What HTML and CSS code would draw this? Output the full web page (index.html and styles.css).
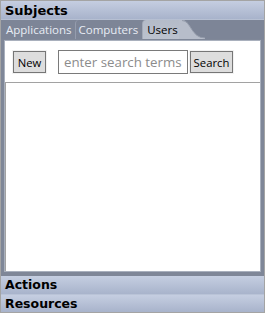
FILE: index.html
```html
<!DOCTYPE html>
<html>
<head>
<meta charset="utf-8">
<link rel="stylesheet" href="styles.css">
</head>
<body>
<div class="panel">
  <div class="bar head">Subjects</div>
  <div class="tabs">
    <div class="tab">Applications</div>
    <div class="tab">Computers</div>
    <div class="tab active">Users
      <svg class="curve" width="26" height="19" viewBox="0 0 26 19"><path d="M0 0 H3 C12 0 12 18 26 18 V19 H0 Z" fill="#b7bdca"/><path d="M3 0.5 C12 0.5 12 18 26 18" fill="none" stroke="#959cab"/></svg>
    </div>
  </div>
  <div class="frame">
    <div class="content">
      <div class="toolbar">
        <button class="btn new">New</button>
        <input class="search" type="text" placeholder="enter search terms">
        <button class="btn find">Search</button>
      </div>
      <div class="list"></div>
    </div>
  </div>
  <div class="bar foot">Actions</div>
  <div class="bar foot last">Resources</div>
</div>
</body>
</html>
```
FILE: styles.css
```css
html, body { margin: 0; padding: 0; background: #fff; }
body { font-family: "Open Sans", sans-serif; }
.panel {
  width: 263px; height: 311px;
  border: 1px solid #a4a4a4;
  display: flex; flex-direction: column;
  background: #8a92a4;
}
.bar {
  height: 18px; line-height: 18px;
  font-family: "DejaVu Sans", sans-serif;
  font-weight: bold; font-size: 12.5px; color: #000;
  padding-left: 4px;
  background: linear-gradient(#c5cee1, #a8b3cb);
  flex: none;
}
.head { border-bottom: 1px solid #b6bfd2; height: 18px; line-height: 19px; font-size: 13px; }
.tabs {
  height: 19px; display: flex; align-items: flex-end;
  background: #7d8597; padding-left: 2px; flex: none;
}
.tab {
  position: relative;
  font-family: "Open Sans", sans-serif;
  font-size: 11.5px; color: #e8ecf4; height: 19px; line-height: 20px;
  padding: 0 3px 0 3px;
  border-left: 1px solid #959cad;
  border-radius: 4px 0 0 0;
}
.tab:first-child { border-left: none; }
.tab.active {
  background: linear-gradient(#b4bbc8, #bcc2ce); color: #000;
  margin-left: 1px; padding-left: 4px; padding-right: 1px;
  border-left: 1px solid #a3aab8;
}
.curve { position: absolute; left: 100%; top: 0; }
.frame {
  flex: 1; padding: 1px 3px 4px 3px; background: #7f8798;
  display: flex;
}
.content {
  flex: 1; background: #fff; border: 1px solid #a9b0bd;
  display: flex; flex-direction: column;
}
.toolbar {
  display: flex; align-items: center;
  padding: 9px 0 8px 8px;
}
.btn {
  font-family: "Open Sans", sans-serif; font-size: 11.3px; color: #000;
  height: 22px; padding: 0; background: #dddddd;
  border: 1px solid #767676; box-shadow: 0 0 0 1px #f2f2f2;
}
.new { width: 33px; }
.find { width: 43px; }
.search {
  width: 130px; height: 24px; box-sizing: border-box; margin: 0 2px 0 12px;
  border: 1px solid #7a7a7a; padding: 0 5px;
  font-family: "Open Sans", sans-serif; font-size: 13.3px; outline: none;
}
.search::placeholder { color: #8c8c8c; }
.list { flex: 1; border-top: 1px solid #a2a2a2; border-left: 1px solid #a2a2a2; }
.foot.last { border-top: 1px solid #b9c3d7; height: 17px; }
```
